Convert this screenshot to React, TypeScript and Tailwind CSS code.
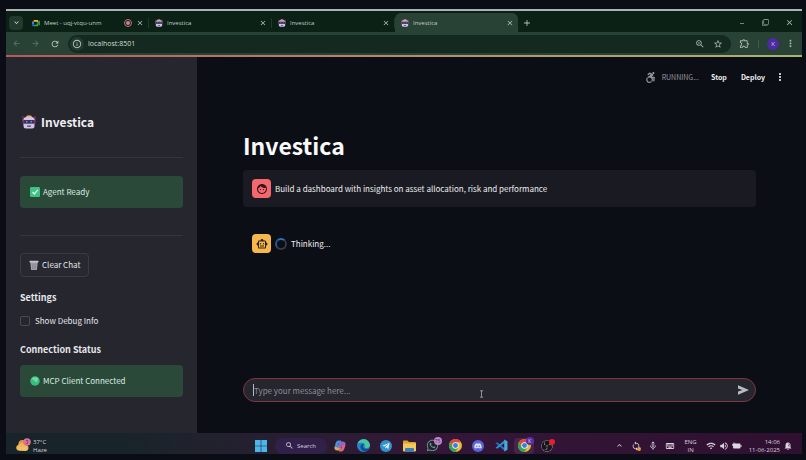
import { useState } from 'react';
import type { ReactNode } from 'react';
import {
    MdAdd,
    MdArrowBack,
    MdArrowForward,
    MdClose,
    MdFace,
    MdFilterNone,
    MdInfoOutline,
    MdKeyboardArrowDown,
    MdKeyboardArrowUp,
    MdMicNone,
    MdMinimize,
    MdMoreVert,
    MdOutlineExtension,
    MdOutlineKeyboard,
    MdOutlineSmartToy,
    MdRefresh,
    MdSearch,
    MdStarBorder,
    MdSync,
    MdVolumeUp,
    MdWifi,
    MdZoomIn,
} from 'react-icons/md';
import { FaAccessibleIcon, FaDiscord, FaTelegramPlane, FaWhatsapp } from 'react-icons/fa';
import { SiObsstudio } from 'react-icons/si';

interface Tab {
    title: string;
    kind: 'meet' | 'robot';
    recording?: boolean;
    active?: boolean;
}

const tabs: Tab[] = [
    { title: 'Meet - uqj-vtqu-unm', kind: 'meet', recording: true },
    { title: 'Investica', kind: 'robot' },
    { title: 'Investica', kind: 'robot' },
    { title: 'Investica', kind: 'robot', active: true },
];

function RobotFace({ className }: { className: string }) {
    return (
        <svg viewBox="0 0 28 28" className={className} aria-hidden="true">
            <path d="M2 2v12M26 2v12" stroke="#a92f55" strokeWidth="2" />
            <path d="M8 5a6 4.500 0 0 1 12 0z" fill="#e9ac5c" />
            <path d="M3 9q0-5 6-5h10q6 0 6 5v13q0 5-5 5H8q-5 0-5-5z" fill="#cfc4e4" />
            <rect x="1" y="10" width="26" height="7" rx="3" fill="#8c3a68" />
            <rect x="3" y="10" width="22" height="7" rx="3" fill="#353161" />
            <circle cx="9.500" cy="13.500" r="1.800" fill="#7287c8" />
            <circle cx="18.500" cy="13.500" r="1.800" fill="#7287c8" />
            <rect x="10" y="21" width="8" height="2.500" rx="1" fill="#4b416f" />
        </svg>
    );
}

function MeetLogo() {
    return (
        <svg viewBox="0 0 24 24" className="size-2 shrink-0" aria-hidden="true">
            <path d="M6 3v6H0z" fill="#e0493e" />
            <path d="M6 3h10q3 0 3 3v4h-5V8H6z" fill="#e9b92f" />
            <path d="M0 9h6v7H0z" fill="#3c7de0" />
            <path d="M0 16h6v6H3q-3 0-3-3z" fill="#2c63c9" />
            <path d="M6 17h8v-3h5v5q0 3-3 3H6z" fill="#2fa84f" />
            <path d="M14 12l8-7q2-1 2 1v12q0 2-2 1z" fill="#2c9448" />
        </svg>
    );
}

function TabItem({ tab }: { tab: Tab }) {
    return (
        <div
            className={
                tab.active
                    ? 'flex h-full w-[123px] min-w-0 items-center gap-1 rounded-t-md bg-[#294236] pr-1 pl-1.5'
                    : 'my-auto flex h-2.5 w-[123px] min-w-0 items-center gap-1 border-r border-[#1f3a2b] pr-1 pl-1.5'
            }
        >
            {tab.kind === 'meet' ? <MeetLogo /> : <RobotFace className="size-2 shrink-0" />}
            <span className="flex-1 truncate text-[6px] leading-[10px] text-[#c0cdc5]">{tab.title}</span>
            {tab.recording && (
                <span className="flex size-2 items-center justify-center rounded-full border border-[#b8767a]">
                    <span className="size-1 rounded-full bg-[#d38085]" />
                </span>
            )}
            <button aria-label="Close tab" className="text-[#b5c4bb]">
                <MdClose size={8} />
            </button>
        </div>
    );
}

function BrowserChrome() {
    return (
        <header className="font-['Open_Sans','Noto_Sans',sans-serif] text-[#a9b9b0]">
            <div className="flex h-[21px] items-stretch bg-[#0b2116] pt-0.5 pr-2">
                <button
                    aria-label="Search tabs"
                    className="my-auto ml-[3px] flex size-3.5 items-center justify-center rounded bg-[#223a2e] text-[#d3ded7]"
                >
                    <MdKeyboardArrowDown size={9} />
                </button>
                <div className="flex min-w-0 pl-[3px]">
                    {tabs.map((tab, i) => (
                        <TabItem key={i} tab={tab} />
                    ))}
                </div>
                <button aria-label="New tab" className="ml-1 text-[#b5c4bb]">
                    <MdAdd size={10} />
                </button>
                <div className="ml-auto flex items-center gap-4">
                    <button aria-label="Minimize">
                        <MdMinimize size={8} className="mb-1" />
                    </button>
                    <button aria-label="Restore">
                        <MdFilterNone size={7} />
                    </button>
                    <button aria-label="Close window">
                        <MdClose size={9} />
                    </button>
                </div>
            </div>

            <div className="flex h-[23px] items-center bg-[#294236] pr-1.5 pl-1.5">
                <div className="flex w-14 items-center gap-2.5">
                    <button aria-label="Back" className="text-[#61776b]">
                        <MdArrowBack size={9} />
                    </button>
                    <button aria-label="Forward" className="text-[#61776b]">
                        <MdArrowForward size={9} />
                    </button>
                    <button aria-label="Reload" className="text-[#c0cdc6]">
                        <MdRefresh size={10} />
                    </button>
                </div>
                <div className="flex h-[18px] min-w-0 flex-1 items-center gap-1 rounded-full bg-[#14291f] pr-2 pl-0.5">
                    <span className="flex size-3.5 items-center justify-center rounded-full bg-[#223a2e]">
                        <MdInfoOutline size={10} className="text-[#bccac2]" />
                    </span>
                    <input
                        aria-label="Address"
                        defaultValue="localhost:8501"
                        className="min-w-0 flex-1 bg-transparent text-[7px] leading-[10px] text-[#d3ded7] outline-none"
                    />
                    <MdZoomIn size={10} />
                    <MdStarBorder size={10} className="ml-1" />
                </div>
                <button aria-label="Extensions" className="ml-2">
                    <MdOutlineExtension size={11} />
                </button>
                <span className="mx-2 h-2 w-px bg-[#41594c]" />
                <button
                    aria-label="Profile"
                    className="size-3 rounded-full bg-[#4e2aa0] text-[6px] leading-3 text-[#d2c8ea]"
                >
                    K
                </button>
                <button aria-label="Menu" className="ml-1.5">
                    <MdMoreVert size={11} />
                </button>
            </div>
        </header>
    );
}

function SuccessBox({ children }: { children: ReactNode }) {
    return (
        <div className="flex h-8 items-center gap-[3px] rounded bg-[#2a4939] px-2.5 text-[8px] leading-3 text-[#dcebe1]">
            {children}
        </div>
    );
}

function Sidebar() {
    const [debug, setDebug] = useState(false);

    return (
        <aside className="w-[191px] shrink-0 bg-[#25262e] px-3.5 pt-14 text-[#e6e7ea]">
            <h2 className="flex h-[18px] items-center gap-[5px] pl-0.5 text-[12px] leading-[18px] font-bold text-[#efeff2]">
                <RobotFace className="size-3.5" />
                Investica
            </h2>
            <hr className="mt-[26px] mb-[18px] border-[#34363f]" />
            <SuccessBox>
                <svg viewBox="0 0 12 12" className="size-2.5" aria-hidden="true">
                    <rect width="12" height="12" rx="1.5" fill="#3fc380" />
                    <path d="M3 6l2.200 2.400L9.300 3.400" fill="none" stroke="#e9f8ee" strokeWidth="1.500" />
                </svg>
                Agent Ready
            </SuccessBox>
            <hr className="mt-[27px] mb-[17px] border-[#34363f]" />
            <button className="flex h-6 items-center gap-[3px] rounded border border-[#3a3b43] bg-[#272830] px-2 text-[8px] leading-3">
                <svg viewBox="0 0 12 12" className="size-2.5" aria-hidden="true">
                    <path d="M1.500 2.500h9L9.500 12h-7z" fill="#a2a2ac" />
                    <path d="M4 4l.4 7M6 4v7M8 4l-.4 7" stroke="#777782" strokeWidth=".6" />
                    <rect x=".5" y="1" width="11" height="2" rx=".8" fill="#c3c3cc" />
                </svg>
                Clear Chat
            </button>
            <h3 className="mt-3.5 text-[9px] leading-[14px] font-bold">Settings</h3>
            <label className="mt-2 flex h-4 items-center gap-[5px] text-[8px] leading-3">
                <input
                    type="checkbox"
                    checked={debug}
                    onChange={(e) => setDebug(e.target.checked)}
                    className="size-2.5 appearance-none rounded-[2px] border border-[#484a53] checked:bg-[#ff4b4b]"
                />
                Show Debug Info
            </label>
            <h3 className="mt-3.5 text-[9px] leading-[14px] font-bold">Connection Status</h3>
            <div className="mt-2">
                <SuccessBox>
                    <svg viewBox="0 0 12 12" className="size-2.5" aria-hidden="true">
                        <circle cx="6" cy="6" r="5.700" fill="#37bf7d" />
                        <path d="M2 3a5.700 5.700 0 0 1 8 0L8 8z" fill="#72d9a1" />
                    </svg>
                    MCP Client Connected
                </SuccessBox>
            </div>
        </aside>
    );
}

function Chat() {
    const [message, setMessage] = useState('');

    return (
        <main className="flex min-w-0 flex-1 flex-col bg-[#0c0e16] text-[#eeeef1]">
            <div className="flex h-10 items-center justify-end gap-2.5 pr-[19px] text-[7px] leading-3">
                <span className="flex items-center gap-1.5 text-[#96989f]">
                    <FaAccessibleIcon size={11} />
                    RUNNING...
                </span>
                <button className="px-0.5 font-bold">Stop</button>
                <button className="px-0.5 font-bold">Deploy</button>
                <button aria-label="App menu" className="flex w-1.5 justify-center">
                    <MdMoreVert size={12} className="shrink-0" />
                </button>
            </div>

            <div className="flex flex-1 flex-col px-[46px] pb-[31px]">
                <h1 className="mt-8 text-[23px] leading-8 font-bold text-[#fafafb]">Investica</h1>
                <div className="mt-[9px] flex h-[37px] items-center gap-1 rounded bg-[#191a22] px-[9px]">
                    <span className="flex size-[19px] shrink-0 items-center justify-center rounded bg-[#f4686d] text-[#32151c]">
                        <MdFace size={12} />
                    </span>
                    <p className="text-[8px] leading-3">
                        Build a dashboard with insights on asset allocation, risk and performance
                    </p>
                </div>
                <div className="mt-[18px] flex h-[37px] items-center gap-1 px-[9px]">
                    <span className="flex size-[19px] shrink-0 items-center justify-center rounded bg-[#f6b84c] text-[#2c2414]">
                        <MdOutlineSmartToy size={12} />
                    </span>
                    <span className="size-3 rounded-full border-2 border-[#343943] border-t-[#2c70b8] border-l-[#28578c]" />
                    <span className="text-[8px] leading-3">Thinking...</span>
                </div>

                <form
                    onSubmit={(e) => e.preventDefault()}
                    className="relative mt-auto flex h-6 items-center rounded-full border border-[#82343f] bg-[#25262e] pr-1.5 pl-[9px]"
                >
                    <span className="h-3 w-px bg-[#b9bac0]" />
                    <input
                        aria-label="Message"
                        placeholder="Type your message here..."
                        value={message}
                        onChange={(e) => setMessage(e.target.value)}
                        className="h-4 min-w-0 flex-1 bg-transparent text-[8px] leading-3 outline-none placeholder:text-[#8c8d95]"
                    />
                    <button aria-label="Send" className="text-[#b9bac2]">
                        <svg viewBox="0 0 24 24" className="size-3" fill="currentColor" aria-hidden="true">
                            <path d="M2 2.500 24 12 2 21.500V15l9-3-9-3z" />
                        </svg>
                    </button>
                    {/* Text cursor */}
                    <svg
                        viewBox="0 0 6 10"
                        className="absolute top-[11px] left-[46%] h-2 w-[5px]"
                        fill="none"
                        stroke="#a9aab0"
                        aria-hidden="true"
                    >
                        <path d="M1 1h4M3 1v8M1 9h4" />
                    </svg>
                </form>
            </div>
        </main>
    );
}

function ChromeLogo() {
    return (
        <svg viewBox="0 0 24 24" className="size-[13px]" aria-hidden="true">
            <circle cx="12" cy="12" r="12" fill="#e9bd33" />
            <path d="M1.600 6A12 12 0 0 1 22.400 6H12L7 15z" fill="#dc4a3d" />
            <path d="M1.600 6A12 12 0 0 0 12 24l5-9-5 3-5-3z" fill="#32a353" />
            <circle cx="12" cy="12" r="6" fill="#eef0f5" />
            <circle cx="12" cy="12" r="4.500" fill="#397fe2" />
        </svg>
    );
}

function AppButton({ label, children }: { label: string; children: ReactNode }) {
    return (
        <button aria-label={label} className="relative flex h-[18px] w-[23px] items-center justify-center">
            {children}
        </button>
    );
}

function Taskbar() {
    return (
        <footer className="flex h-[21px] items-center bg-linear-to-r from-[#18242a] from-15% via-[#341638] via-55% to-[#2f1030] pt-1 font-['Open_Sans','Noto_Sans',sans-serif] text-[6px] leading-2 text-[#d8d1de]">
            <div className="flex flex-1 items-center gap-0.5 pl-2.5">
                <svg viewBox="0 0 30 30" className="size-[15px]" aria-hidden="true">
                    <circle cx="13" cy="12" r="8" fill="#e99347" />
                    <path d="M4 25a6 6 0 0 1 0-11 8 8 0 0 1 14 0q8 0 7 7-1 5-6 5z" fill="#edb65c" />
                    <path d="M3 20h19M6 24h14" stroke="#f4cf83" strokeWidth="1.500" />
                    <circle cx="22" cy="8" r="7.500" fill="#d9739a" />
                    <path d="M20 5h4l-2 2.500q3 .5 1 3.500h-3" fill="none" stroke="#682d4a" strokeWidth="1.200" />
                </svg>
                <div>
                    <p>37°C</p>
                    <p>Haze</p>
                </div>
            </div>

            <nav className="flex items-center">
                <AppButton label="Start">
                    <svg viewBox="0 0 12 12" className="size-3" fill="#4ab6ec" aria-hidden="true">
                        <path d="M0 0h5.700v5.700H0zM6.300 0H12v5.700H6.300zM0 6.300h5.700V12H0zM6.300 6.300H12V12H6.300z" />
                    </svg>
                </AppButton>
                <button className="mx-0.5 flex h-4 w-[52px] items-center justify-center gap-[3px] rounded-full bg-[#30204a]">
                    <MdSearch size={9} />
                    Search
                </button>
                <AppButton label="Copilot">
                    <svg viewBox="0 0 24 24" className="size-3" fill="none" strokeWidth="6" strokeLinejoin="round" aria-hidden="true">
                        <path d="M14 4H9Q7 4 6 8l-2 7" stroke="#369bd6" />
                        <path d="M4 14q-1 4 3 4h3l3-10" stroke="#d9ad50" />
                        <path d="M10 20h5q2 0 3-4l2-7" stroke="#d86b79" />
                        <path d="M20 10q1-4-3-4h-3l-3 10" stroke="#9c60cf" />
                    </svg>
                </AppButton>
                <AppButton label="Edge">
                    <svg viewBox="0 0 24 24" className="size-[13px]" aria-hidden="true">
                        <circle cx="12" cy="12" r="12" fill="#2384d4" />
                        <path d="M1 9C4-2 21-3 24 11c0 6-7 7-10 4 3-5-2-9-7-8q-4 0-6 2z" fill="#47c79b" />
                        <path d="M8 10c-4 5 0 13 8 13 3-1 5-3 7-6-5 3-12 1-12-4q0-2 2-4-3-1-5 1z" fill="#154b8b" />
                    </svg>
                </AppButton>
                <AppButton label="Telegram">
                    <span className="flex size-3 items-center justify-center rounded-full bg-[#2d94ce] text-[#e2edf5]">
                        <FaTelegramPlane size={8} />
                    </span>
                </AppButton>
                <AppButton label="File Explorer">
                    <svg viewBox="0 0 26 24" className="h-3 w-[13px]" aria-hidden="true">
                        <path d="M0 3q0-2 2-2h7l3 3h12q2 0 2 2v15H0z" fill="#dda42f" />
                        <path d="M0 7h26v14q0 2-2 2H2q-2 0-2-2z" fill="#f3ca57" />
                        <path d="M4 23v-5q0-2 2-2h14q2 0 2 2v5z" fill="#347fc3" />
                    </svg>
                </AppButton>
                <AppButton label="WhatsApp">
                    <FaWhatsapp size={13} className="text-[#50a57b]" />
                    <span className="absolute top-0 right-0.5 size-2 rounded-full bg-[#bc8cc9] text-center text-[5px] leading-2 text-[#4b285b]">
                        75
                    </span>
                </AppButton>
                <AppButton label="Chrome">
                    <ChromeLogo />
                </AppButton>
                <AppButton label="Discord">
                    <span className="flex size-3 items-center justify-center rounded-full bg-[#5865d8] text-[#dde0f7]">
                        <FaDiscord size={8} />
                    </span>
                </AppButton>
                <AppButton label="Visual Studio Code">
                    <svg viewBox="0 0 24 24" className="size-[13px]" aria-hidden="true">
                        <path d="M1 8l3-2 14 11v5z" fill="#1d77b8" />
                        <path d="M1 16l3 2L18 7V2z" fill="#2b92d4" />
                        <path d="M17 1l6 3v16l-6 3z" fill="#46aae4" />
                    </svg>
                </AppButton>
                <AppButton label="Chrome, work profile">
                    <span className="flex h-4 w-5 items-center justify-center rounded-sm bg-[#45264b]">
                        <ChromeLogo />
                    </span>
                    <span className="absolute top-0 right-0.5 size-2 rounded-full bg-[#5930a4] text-center text-[5px] leading-2">
                        K
                    </span>
                </AppButton>
                <AppButton label="OBS Studio">
                    <SiObsstudio size={12} className="rounded-full bg-[#17151c] text-[#aaa4ad]" />
                    <span className="absolute top-0.5 right-1 size-1.5 rounded-full bg-[#e5202a]" />
                </AppButton>
            </nav>

            <div className="flex flex-1 items-center justify-end gap-[3px] pr-2.5">
                <MdKeyboardArrowUp size={9} className="mr-1" />
                <span className="relative mr-1">
                    <MdSync size={10} />
                    <span className="absolute right-0 bottom-0 size-1 rounded-full bg-[#e79c3d]" />
                </span>
                <MdMicNone size={10} className="mr-1" />
                <MdOutlineKeyboard size={10} className="mr-1.5" />
                <div className="mr-1.5 text-center">
                    <p>ENG</p>
                    <p>IN</p>
                </div>
                <MdWifi size={10} />
                <MdVolumeUp size={10} />
                <svg viewBox="0 0 20 14" className="h-[7px] w-2.5" aria-hidden="true">
                    <rect x="2" y="3" width="15" height="10" rx="2" fill="#ddd5df" />
                    <path d="M18 6v4" stroke="#ddd5df" strokeWidth="2" />
                    <path d="M4 0v5M1 4h7v3H1z" stroke="#ddd5df" fill="#ddd5df" />
                </svg>
                <div className="ml-1 text-right">
                    <p>14:06</p>
                    <p>11-06-2025</p>
                </div>
                <svg viewBox="0 0 16 16" className="ml-px size-2" aria-hidden="true">
                    <path d="M3 11V7q0-6 5-6t5 6v4l2 2H1z" fill="#ddd5df" />
                    <path d="M6 14h4l-2 2z" fill="#ddd5df" />
                    <path d="M8 4h4l-4 4h4" stroke="#4b2a4e" fill="none" />
                </svg>
            </div>
        </footer>
    );
}

export default function App() {
    return (
        <div className="flex min-h-screen flex-col bg-[#0b0d16] pt-[9px] pr-1 pb-1.5 pl-1.5">
            <div className="flex flex-1 flex-col border-t-2 border-[#a8b3ae]">
                <BrowserChrome />
                <div className="h-0.5 bg-linear-to-r from-[#b45a5a] via-[#b98a6c] to-[#a9b473]" />
                <div className="flex flex-1 font-['Noto_Sans_CJK_SC',sans-serif]">
                    <Sidebar />
                    <Chat />
                </div>
                <Taskbar />
            </div>
        </div>
    );
}
